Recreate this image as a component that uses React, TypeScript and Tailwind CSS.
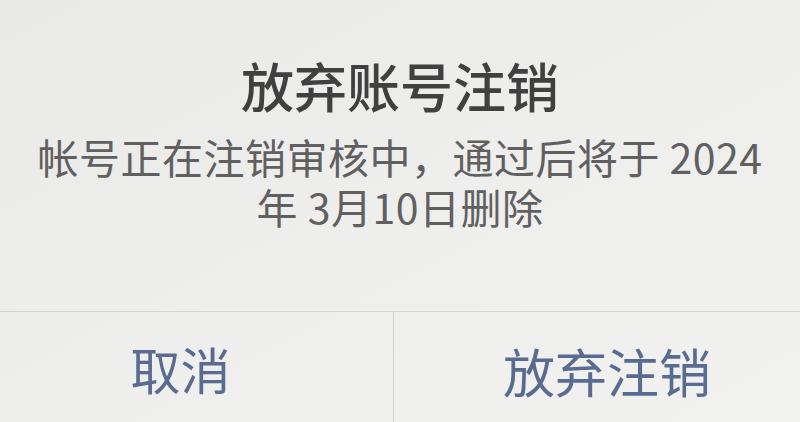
export default function App() {
  return (
    <div
      className="h-[422px] w-[800px] overflow-hidden bg-gradient-to-br from-[#e9e9e7] via-[#eeeeec] to-[#f1f1ef] text-center"
      style={{ fontFamily: '"Noto Sans CJK SC", "Noto Sans", sans-serif' }}
    >
      {/* 标题和说明 */}
      <div className="flex flex-col items-center px-[30px] pt-[55px]">
        <h1 className="text-[53px] leading-[60px] font-medium text-[#404040]">
          放弃账号注销
        </h1>
        <div className="mt-[16px] flex flex-col text-[41px] leading-[50px] tracking-[0.5px] text-[#606060]">
          <span>帐号正在注销审核中，通过后将于 2024</span>
          <span>年 3月10日删除</span>
        </div>
      </div>

      {/* 按钮 */}
      <div className="mt-[80px] flex h-[122px] border-t border-[#d3d3d1]">
        <button className="flex w-[394px] items-center justify-center border-r border-[#d3d3d1] text-[50px] text-[#5a6b92]">
          <span className="-translate-x-[16px] -translate-y-[4px]">取消</span>
        </button>
        <button className="flex flex-1 items-center justify-center text-[52px] text-[#5a6b92]">
          <span className="translate-x-[10px] -translate-y-[2px]">放弃注销</span>
        </button>
      </div>
    </div>
  );
}
